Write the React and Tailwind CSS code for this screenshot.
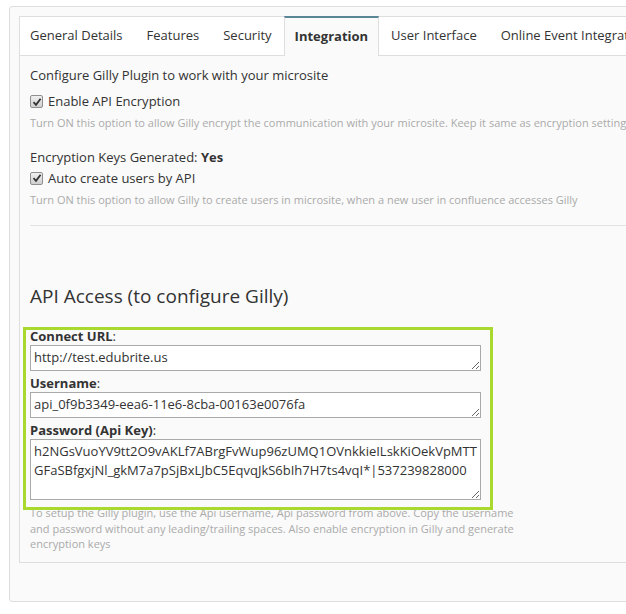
import React from "react";

const tabs = ["General Details", "Features", "Security", "Integration", "User Interface", "Online Event Integration"];

function Check({ label }) {
  return (
    <label className="flex items-center gap-[5px] text-[13px] text-[#333]">
      <span className="w-[13px] h-[13px] rounded-[2px] border border-[#8f8f8f] bg-gradient-to-b from-[#f0f0f0] to-[#cfcfcf] flex items-center justify-center">
        <svg width="10" height="10" viewBox="0 0 10 10">
          <path d="M1.5 5.2 L4 7.8 L8.6 1.8" fill="none" stroke="#333" strokeWidth="1.8" />
        </svg>
      </span>
      {label}
    </label>
  );
}

function Field({ label, value, rows = 1, h = "h-[26px]" }) {
  return (
    <div className="flex flex-col">
      <div className="text-[13px] leading-[18px] text-[#333]">
        <b className="font-bold">{label}</b>:
      </div>
      <textarea
        readOnly
        rows={rows}
        value={value}
        className={`${h} w-[451px] border border-[#a9a9a9] bg-white px-[3px] py-[2px] text-[13px] leading-[19px] text-[#333] break-all outline-none`}
        style={{ fontFamily: "'Open Sans', sans-serif" }}
      />
    </div>
  );
}

export default function App() {
  return (
    <div className="w-[626px] h-[614px] overflow-hidden bg-white" style={{ fontFamily: "'Open Sans', 'DejaVu Sans', sans-serif" }}>
      <div className="ml-[9px] mt-[6px] w-[700px] h-[596px] border border-[#dedede] rounded-[3px] bg-[#fafafa] pl-[9px] pt-[9px]">
        <div className="flex border border-[#dedede] border-r-0 bg-white h-[40px] text-[13px] text-[#333]">
          {tabs.map((t, i) =>
            t === "Integration" ? (
              <div key={t} className="px-[10px] -mt-px -mb-px border-t-[2px] border-t-[#5a8797] border-x border-x-[#dedede] bg-[#fafafa] font-bold flex items-center">
                {t}
              </div>
            ) : (
              <div key={t} className={`${i === 0 ? "pl-[10px]" : "pl-[12px]"} pr-[12px] flex items-center whitespace-nowrap`}>
                {t}
              </div>
            )
          )}
        </div>
        <div className="border border-t-0 border-r-0 border-[#dedede] h-[507px] pl-[10px] pt-[10px]">
          <div className="text-[13px] leading-[18px] text-[#333]">Configure Gilly Plugin to work with your microsite</div>
          <div className="mt-[8px]"><Check label="Enable API Encryption" /></div>
          <div className="mt-[3px] text-[11px] leading-[15px] text-[#aaa] whitespace-nowrap">
            Turn ON this option to allow Gilly encrypt the communication with your microsite. Keep it same as encryption setting in Gilly
          </div>
          <div className="mt-[18px] text-[13px] leading-[18px] text-[#333]">
            Encryption Keys Generated: <b>Yes</b>
          </div>
          <div className="mt-[3px]"><Check label="Auto create users by API" /></div>
          <div className="mt-[4px] text-[11px] leading-[15px] text-[#aaa] whitespace-nowrap">
            Turn ON this option to allow Gilly to create users in microsite, when a new user in confluence accesses Gilly
          </div>
          <div className="mt-[18px] border-t border-[#e3e3e3] w-[660px]" />
          <h2 className="mt-[58px] text-[19px] leading-[24px] text-[#333]">API Access (to configure Gilly)</h2>
          <div className="relative z-10 mt-[19px] -ml-[7px] w-[470px] border-[3px] border-[#a9d82e] pl-[4px] pb-[7px]">
            <div className="-mt-[3px] flex flex-col gap-[3px]">
              <Field label="Connect URL" value="http://test.edubrite.us" />
              <Field label="Username" value="api_0f9b3349-eea6-11e6-8cba-00163e0076fa" />
              <Field
                label="Password (Api Key)"
                rows={3}
                h="h-[61px]"
                value="h2NGsVuoYV9tt2O9vAKLf7ABrgFvWup96zUMQ1OVnkkieILskKiOekVpMTTGFaSBfgxjNl_gkM7a7pSjBxLJbC5EqvqJkS6bIh7H7ts4vqI*|537239828000"
              />
            </div>
          </div>
          <p className="-mt-[5px] w-[490px] text-[11px] leading-[15.5px] text-[#aaa]">
            To setup the Gilly plugin, use the Api username, Api password from above. Copy the username and password without any leading/trailing spaces. Also enable encryption in Gilly and generate encryption keys
          </p>
        </div>
      </div>
    </div>
  );
}
